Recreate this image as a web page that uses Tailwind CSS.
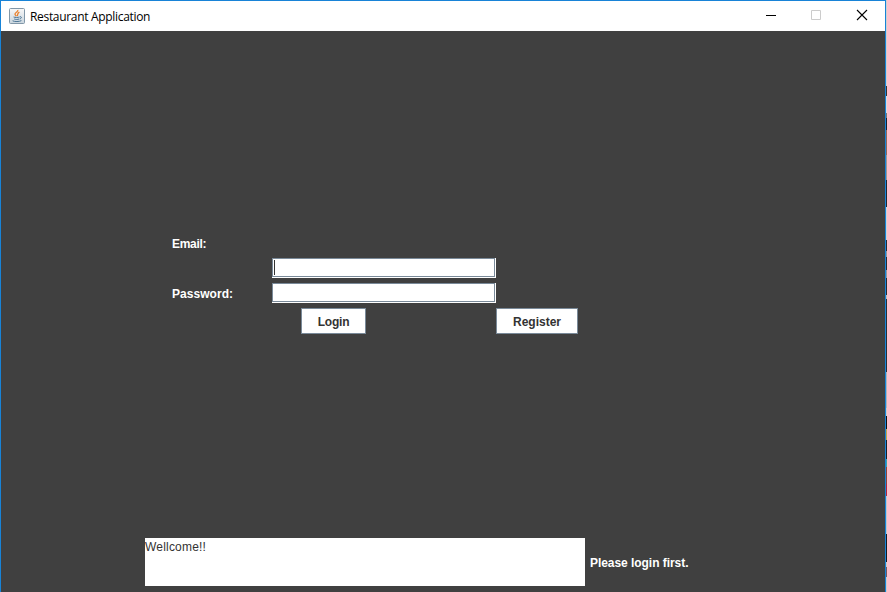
<!DOCTYPE html>
<html lang="en">
<head>
<meta charset="utf-8">
<title>Restaurant Application</title>
<script src="https://cdn.jsdelivr.net/npm/@tailwindcss/browser@4"></script>
</head>
<body class="flex h-[592px] w-[887px] overflow-hidden bg-white font-['Liberation_Sans',Arial,sans-serif] text-[12px] leading-4">
<div class="flex h-[592px] w-[886px] flex-col border-x border-t border-[#1883d7] bg-[#404040]">
  <header class="flex h-[30px] shrink-0 items-center bg-white pl-2">
    <svg class="h-4 w-4 shrink-0" viewBox="0 0 16 16" fill="none">
      <defs><linearGradient id="tile" x1="0" y1="0" x2="0" y2="1"><stop stop-color="#f8f8f8"/><stop offset="1" stop-color="#c9d5de"/></linearGradient></defs>
      <rect x=".5" y=".5" width="15" height="15" rx="1" fill="url(#tile)" stroke="#8197a8"/>
      <path d="M8.8 2C9.5 4 5.5 4.4 6 6.3c.2.8 1 1.2 1.2 1.9M10.4 4.1C7.8 5.2 9.3 6.4 8.2 8" stroke="#ea812d" stroke-width="1.3"/>
      <path d="M4.6 9c1.2.6 4.6.6 6 0M5.2 11c1.5.6 3.5.6 4.8 0M11 8.7c2.2-.2 1.6 1.9-.4 2.3M3.6 12.8c1.8 1 6.8 1 8.8-.2" stroke="#497394"/>
    </svg>
    <h1 class="ml-[5px] mt-px w-[121px] whitespace-nowrap font-['Open_Sans','Noto_Sans',sans-serif] text-[12px] tracking-[-0.32px] text-black">Restaurant Application</h1>
    <div class="ml-auto flex h-full">
      <svg class="h-[30px] w-[46px]" viewBox="0 0 46 30"><path d="M18 14.5h10" stroke="#000"/></svg>
      <svg class="h-[30px] w-[46px]" viewBox="0 0 46 30"><path d="M17.5 9.5h9v9h-9z" fill="none" stroke="#ccc"/></svg>
      <svg class="h-[30px] w-[45px]" viewBox="0 0 45 30"><path d="M17 9l10 10M27 9L17 19" stroke="#000" stroke-width="1.1"/></svg>
    </div>
  </header>
  <main class="flex grow flex-col">
    <form class="ml-[171px] mt-[204px] grid w-[406px] grid-cols-[100px_224px_82px] grid-rows-[23px_20px_25px_30px]">
      <label class="col-span-3 pt-px font-bold tracking-[-0.3px] text-white">Email:</label>
      <div class="col-start-2 h-5 border-b border-r border-white"><div class="flex h-[19px] items-center border border-[#7a8a99] bg-white pl-px"><span class="h-[15px] w-px bg-[#333]"></span></div></div>
      <label class="col-start-1 pt-2 font-bold tracking-[0.05px] text-white">Password:</label>
      <div class="mt-[5px] h-5 border-b border-r border-white"><div class="h-[19px] border border-[#7a8a99] bg-white"></div></div>
      <button type="button" class="col-start-2 ml-[29px] mt-[5px] h-[26px] w-[65px] border border-[#7a8a99] bg-white pt-0.5 font-bold tracking-[-0.2px] text-[#333]">Login</button>
      <button type="button" class="mt-[5px] h-[26px] w-[82px] border border-[#7a8a99] bg-white pt-0.5 font-bold text-[#333]">Register</button>
    </form>
    <footer class="mb-[6px] ml-[144px] mt-auto flex h-12 items-center">
      <div class="h-12 w-[440px] bg-white pt-px tracking-[0.2px] text-[#333]">Wellcome!!</div>
      <p class="ml-[5px] pt-0.5 font-bold tracking-[-0.05px] text-white">Please login first.</p>
    </footer>
  </main>
</div>
<aside class="flex w-px flex-col">
  <i class="h-[86px] bg-[#d0d0d0]"></i><i class="h-[10px] bg-[#333]"></i><i class="h-[17px] bg-[#d6dce0]"></i><i class="h-[5px] bg-[#777]"></i><i class="h-[12px] bg-[#172230]"></i><i class="h-[25px] bg-[#8b6a5f]"></i><i class="h-[25px] bg-[#999]"></i><i class="h-[27px] bg-[#202833]"></i><i class="h-[33px] bg-[#ccd5da]"></i><i class="h-[11px] bg-[#252c35]"></i><i class="h-[6px] bg-[#8d9aa5]"></i><i class="h-[13px] bg-[#252c35]"></i><i class="h-[8px] bg-[#8d9aa5]"></i><i class="h-[17px] bg-[#252c35]"></i><i class="h-[4px] bg-[#bbb]"></i><i class="h-[73px] bg-[#25303a]"></i><i class="h-[36px] bg-[#aab6bd]"></i><i class="h-[8px] bg-[#ccc]"></i><i class="h-[13px] bg-[#111]"></i><i class="h-[11px] bg-[#bda84e]"></i><i class="h-[19px] bg-[#18202a]"></i><i class="h-[8px] bg-[#38a3ac]"></i><i class="h-[17px] bg-[#8d463b]"></i><i class="h-[12px] bg-[#b3263b]"></i><i class="h-[38px] bg-[#bdc8ce]"></i><i class="h-[28px] bg-[#141c24]"></i><i class="h-[5px] bg-[#ccc]"></i><i class="h-[10px] bg-[#725b65]"></i><i class="grow bg-[#ccc]"></i>
</aside>
</body>
</html>
